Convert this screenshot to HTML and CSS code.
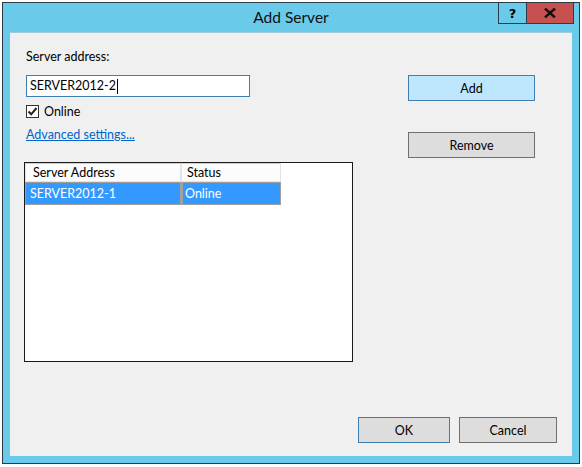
FILE: index.html
```html
<!DOCTYPE html>
<html>
<head>
<meta charset="utf-8">
<link rel="stylesheet" href="styles.css">
</head>
<body>
<div class="window">
  <div class="titlebar">
    <div class="title">Add Server</div>
    <div class="caption-buttons">
      <div class="cap help">?</div>
      <div class="cap close">
        <svg width="12" height="10" viewBox="0 0 12 10"><path d="M1 0.5 L11 9.5 M11 0.5 L1 9.5" stroke="#111" stroke-width="2.4" fill="none"/></svg>
      </div>
    </div>
  </div>
  <div class="client">
    <div class="top">
      <div class="left">
        <div class="label">Server address:</div>
        <div class="input">SERVER2012-2<span class="caret"></span></div>
        <div class="check-row">
          <span class="checkbox"><svg width="11" height="11" viewBox="0 0 11 11"><path d="M1.5 5.5 L4.2 8.3 L9.5 2" stroke="#222" stroke-width="2" fill="none"/></svg></span>
          <span>Online</span>
        </div>
        <a class="link">Advanced settings...</a>
        <div class="list">
          <div class="row header">
            <div class="cell c1">Server Address</div>
            <div class="cell c2">Status</div>
          </div>
          <div class="row selected">
            <div class="cell c1">SERVER2012-1</div>
            <div class="cell c2">Online</div>
          </div>
        </div>
      </div>
      <div class="right">
        <div class="btn wide primary">Add</div>
        <div class="btn wide">Remove</div>
      </div>
    </div>
    <div class="footer">
      <div class="btn ok default">OK</div>
      <div class="btn cancel">Cancel</div>
    </div>
  </div>
</div>
</body>
</html>
```
FILE: styles.css
```css
html, body {
  margin: 0;
  padding: 0;
  background: #ffffff;
}
body {
  width: 582px;
  height: 467px;
  overflow: hidden;
  font-family: Lato, "Noto Sans", sans-serif;
  font-size: 12.5px;
  color: #000;
}
.window {
  margin: 2px 0 0 2px;
  border: 1px solid #2e3a44;
  background: #69cbe9;
  padding: 0 7px 7px 7px;
  box-sizing: content-box;
  display: flex;
  flex-direction: column;
  width: 562px;
  height: 453px;
}
.titlebar {
  height: 29px;
  display: grid;
  grid-template-columns: 1fr auto 1fr;
  align-items: start;
}
.title {
  grid-column: 2;
  font-size: 15.5px;
  line-height: 29px;
  color: #111;
}
.caption-buttons {
  grid-column: 3;
  justify-self: end;
  display: flex;
  margin-top: -1px;
  margin-right: -2px;
  border: 1px solid #2e3a44;
  height: 20px;
}
.cap {
  display: flex;
  align-items: center;
  justify-content: center;
}
.help {
  width: 27px;
  border-right: 1px solid #2e3a44;
  font-weight: bold;
  font-size: 13px;
  font-family: "DejaVu Sans", sans-serif;
}
.close {
  width: 46px;
  background: #c75050;
}
.client {
  flex: 1;
  background: #f0f0f0;
  border-top: 1px solid #a6c8d8;
  display: flex;
  flex-direction: column;
  padding: 16px 15px 13px 16px;
}
.top {
  display: flex;
  flex: 1;
}
.left {
  width: 382px;
  display: flex;
  flex-direction: column;
  align-items: flex-start;
}
.label {
  line-height: 16px;
}
.input {
  margin-top: 10px;
  width: 219px;
  height: 20px;
  border: 1px solid #3c7fb1;
  background: #fff;
  padding: 0 0 0 3px;
  line-height: 20px;
  display: flex;
  align-items: center;
}
.caret {
  display: inline-block;
  width: 1px;
  height: 15px;
  background: #000;
  margin-left: 1px;
}
.check-row {
  margin-top: 8px;
  display: flex;
  align-items: center;
  gap: 5px;
  height: 13px;
}
.checkbox {
  width: 11px;
  height: 11px;
  border: 1px solid #333;
  background: #fff;
  display: flex;
}
.link {
  margin-top: 9px;
  line-height: 16px;
  color: #0066cc;
  text-decoration: underline;
}
.list {
  margin-top: 19px;
  margin-left: -2px;
  width: 327px;
  height: 198px;
  border: 1px solid #1a1a1a;
  background: #fff;
  display: flex;
  flex-direction: column;
}
.row {
  display: flex;
}
.cell {
  box-sizing: border-box;
}
.c1 { width: 156px; }
.c2 { width: 100px; }
.header .cell {
  height: 19px;
  line-height: 17px;
  border: 1px solid #e3e3e3;
  border-top-color: #d0d0d0;
  background: #fcfcfc;
  padding-left: 7px;
}
.header .c2 { padding-left: 5px; }
.selected .cell {
  height: 23px;
  line-height: 21px;
  background: #3399ff;
  color: #fff;
  border: 1px solid #a0a0a0;
  padding-left: 4px;
}
.selected .c2 { border-left: 2px solid #a0a0a0; padding-left: 2px; }
.right {
  padding-top: 26px;
  display: flex;
  flex-direction: column;
  gap: 31px;
}
.btn {
  box-sizing: border-box;
  height: 26px;
  border: 1px solid #707070;
  background: #dddddd;
  display: flex;
  align-items: center;
  justify-content: center;
}
.wide { width: 127px; }
.primary {
  background: #bee6fd;
  border-color: #3c7fb1;
}
.default { border-color: #3c7fb1; }
.footer {
  display: flex;
  justify-content: flex-end;
  gap: 9px;
}
.ok { width: 92px; }
.cancel { width: 98px; }
```
